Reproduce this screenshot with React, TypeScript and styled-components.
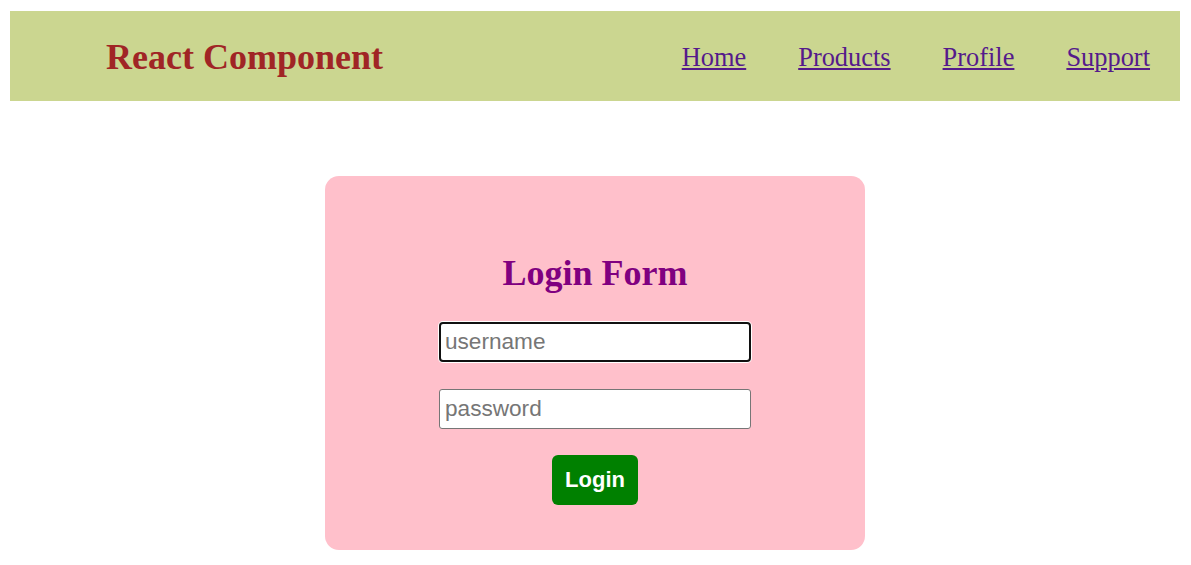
import React from "react";
import styled, { createGlobalStyle } from "styled-components";

const GlobalStyle = createGlobalStyle`
  html, body { margin: 0; padding: 0; background: #ffffff; }
  body { font-family: "Liberation Serif", "Times New Roman", serif; }
`;

const Page = styled.div`
  padding: 11px 11px 0 10px;
  display: flex;
  flex-direction: column;
  align-items: stretch;
`;

const Header = styled.header`
  height: 90px;
  background: #cbd690;
  display: flex;
  align-items: center;
  justify-content: space-between;
  padding: 0 30px 0 96px;
  box-sizing: border-box;
`;

const Brand = styled.h1`
  margin: 0;
  font-family: "Liberation Serif", serif;
  font-size: 36px;
  font-weight: bold;
  color: #a02525;
  line-height: 1;
  padding-top: 2px;
`;

const Nav = styled.nav`
  display: flex;
  gap: 52px;
  align-items: center;
  padding-top: 3px;
`;

const NavLink = styled.a`
  font-family: "Liberation Serif", serif;
  font-size: 26.4px;
  color: #551a8b;
  text-decoration: underline;
  line-height: 1;
`;

const Main = styled.main`
  display: flex;
  justify-content: center;
  padding-top: 75px;
`;

const Card = styled.form`
  width: 540px;
  height: 374px;
  box-sizing: border-box;
  background: #ffc0cb;
  border-radius: 14px;
  display: flex;
  flex-direction: column;
  align-items: center;
  padding-top: 77px;
`;

const Title = styled.h2`
  margin: 0 0 29px;
  font-family: "Liberation Serif", serif;
  font-size: 36px;
  font-weight: bold;
  color: #800080;
  line-height: 40px;
`;

const Input = styled.input<{ $focused?: boolean }>`
  width: 312px;
  height: 40px;
  box-sizing: border-box;
  margin-bottom: 27px;
  padding: 0 5px;
  font-family: "Liberation Sans", Arial, sans-serif;
  font-size: 22.6px;
  color: #000;
  background: #ffffff;
  border: 1px solid #767676;
  border-radius: 3px;
  outline: none;
  ${(p) =>
    p.$focused
      ? `border: 2px solid #101010; border-radius: 4px; padding: 0 4px; box-shadow: 0 0 0 1px #ffffff;`
      : ``}
  &::placeholder {
    color: #767676;
  }
`;

const Button = styled.button`
  margin-top: -1px;
  width: 86px;
  height: 50px;
  background: #008000;
  color: #ffffff;
  border: none;
  border-radius: 6px;
  font-family: "Liberation Sans", Arial, sans-serif;
  font-size: 22px;
  font-weight: bold;
  cursor: pointer;
`;

export default function App() {
  return (
    <>
      <GlobalStyle />
      <Page>
        <Header>
          <Brand>React Component</Brand>
          <Nav>
            <NavLink href="#home">Home</NavLink>
            <NavLink href="#products">Products</NavLink>
            <NavLink href="#profile">Profile</NavLink>
            <NavLink href="#support">Support</NavLink>
          </Nav>
        </Header>
        <Main>
          <Card onSubmit={(e) => e.preventDefault()}>
            <Title>Login Form</Title>
            <Input $focused type="text" placeholder="username" />
            <Input type="password" placeholder="password" />
            <Button type="submit">Login</Button>
          </Card>
        </Main>
      </Page>
    </>
  );
}
